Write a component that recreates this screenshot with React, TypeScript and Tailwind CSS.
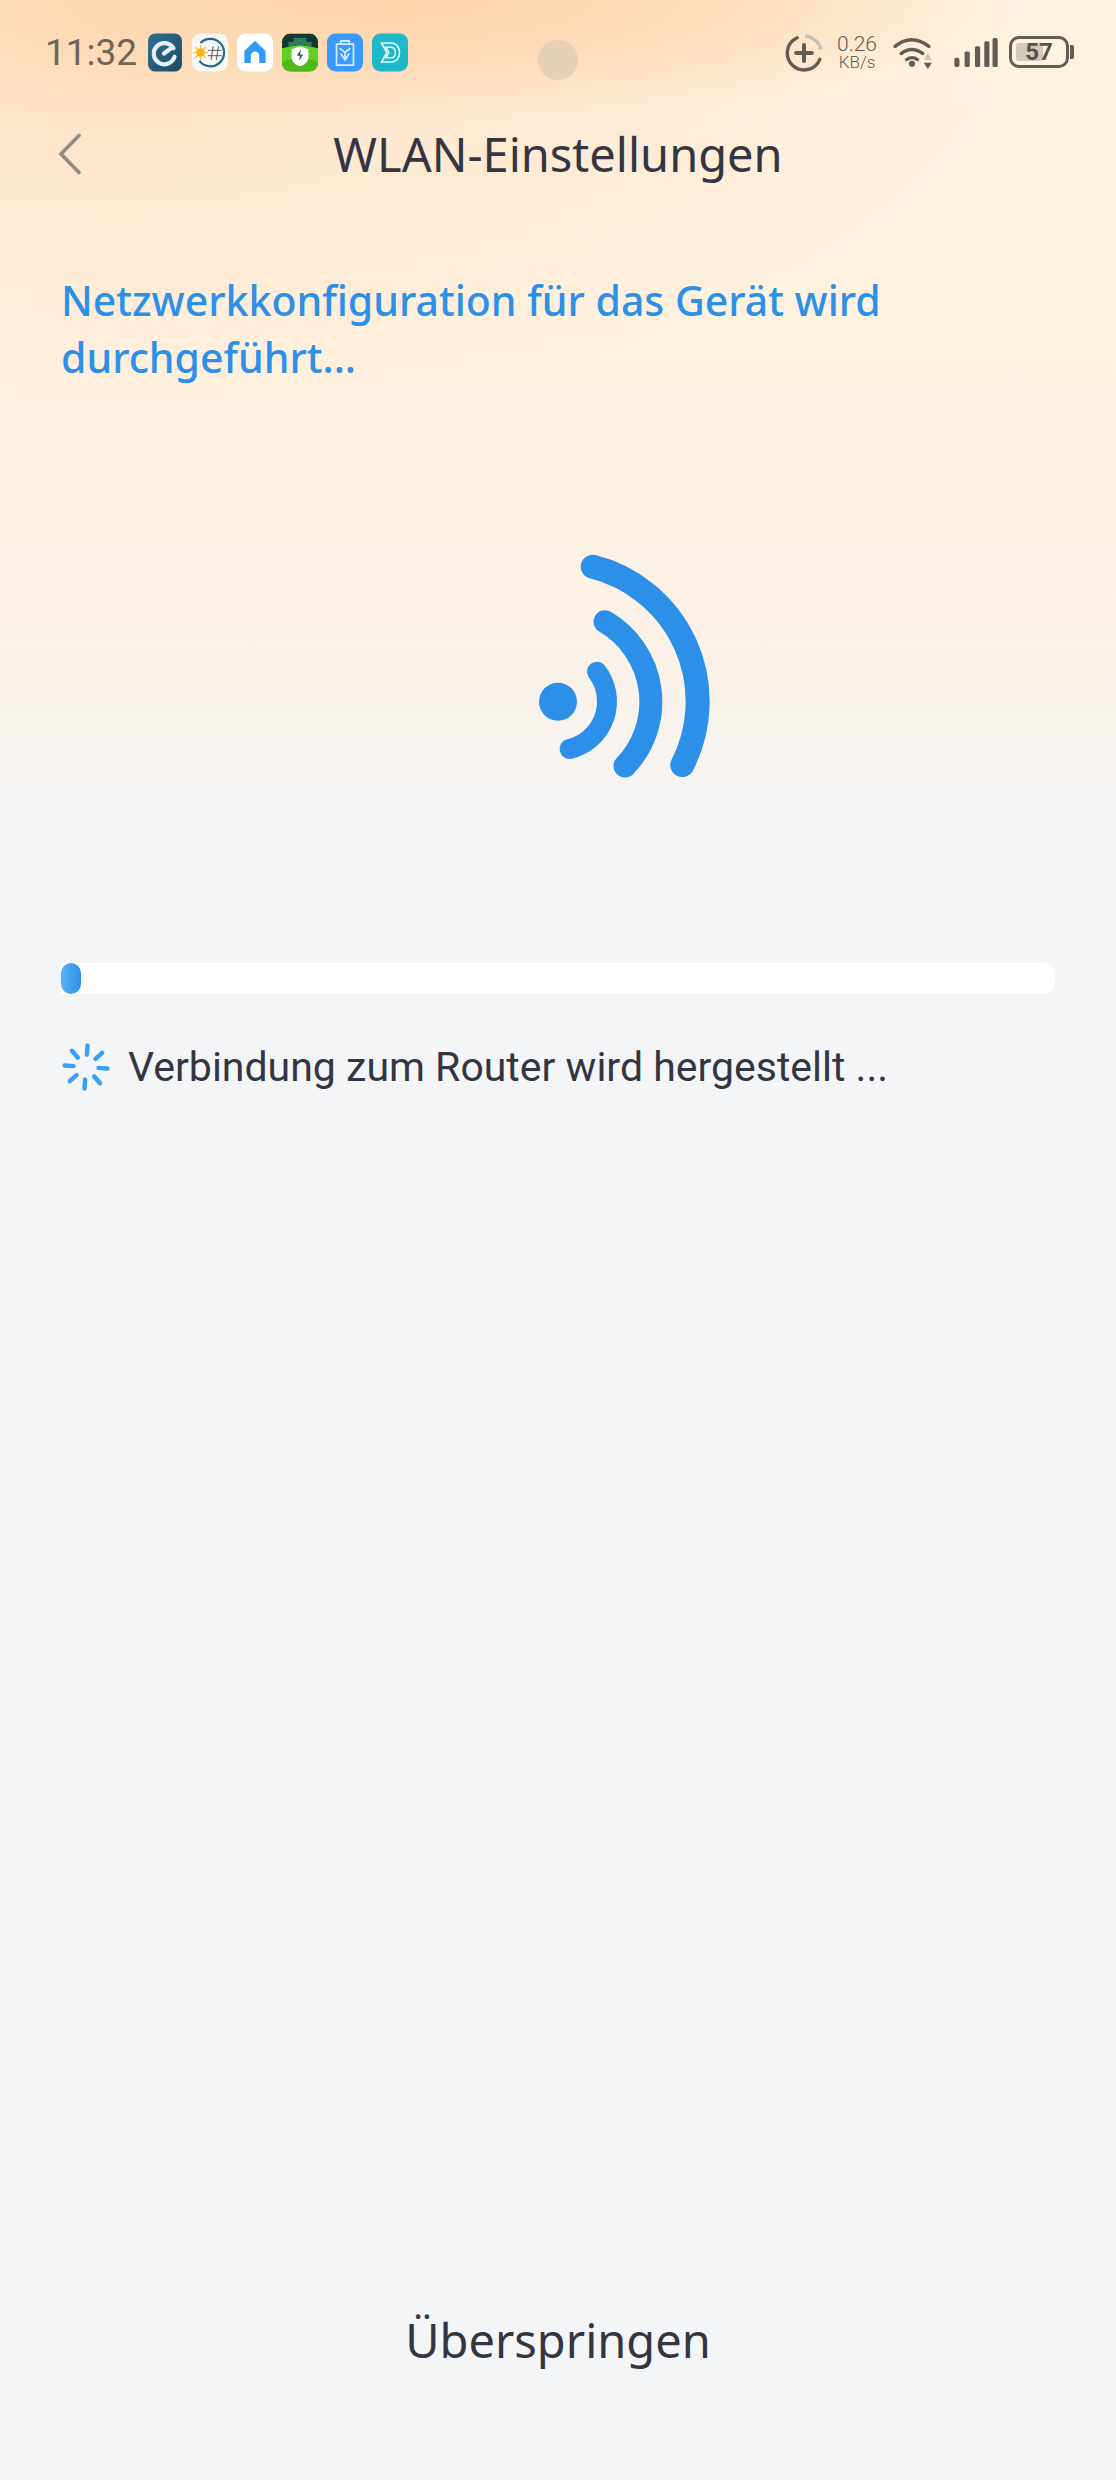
const STATUS_FONT = "font-['Roboto',sans-serif]";

const AppIcons = () => (
  <div className="ml-[10px] flex items-center gap-[9px]">
    <svg width="36" height="39" viewBox="0 0 34 36">
      <defs>
        <linearGradient id="eco" x1="0" y1="0" x2="1" y2="1">
          <stop offset="0" stopColor="#2f6f93" />
          <stop offset="1" stopColor="#1b4a66" />
        </linearGradient>
      </defs>
      <rect width="32" height="36" x="1" rx="7" fill="url(#eco)" />
      <path d="M25 14a10 10 0 1 0 1 8" fill="none" stroke="#e4f1f8" strokeWidth="4" strokeLinecap="round" />
      <path d="M16 19l8-6" fill="none" stroke="#e4f1f8" strokeWidth="4" strokeLinecap="round" />
    </svg>
    <svg width="36" height="39" viewBox="0 0 34 36">
      <rect width="34" height="36" rx="8" fill="#f7f7f4" />
      <path d="M8 9a13 13 0 1 1-1 17" fill="none" stroke="#1f6a8c" strokeWidth="2" />
      <circle cx="8" cy="18" r="4" fill="#f9b21d" />
      <path d="M8 11v14M1 18h14M3 13l10 10M13 13L3 23" stroke="#f9b21d" strokeWidth="1" />
      <path d="M20 12l-2 13M25 12l-2 13M15 16h13M15 21h13" stroke="#3d4a52" strokeWidth="0.8" />
    </svg>
    <svg width="36" height="39" viewBox="0 0 34 36">
      <rect width="34" height="36" rx="8" fill="#ffffff" />
      <path d="M7 28V16.500L17 7l10 9.500V28h-6v-7a4 4 0 0 0-8 0v7z" fill="#2f9bf5" />
    </svg>
    <svg width="36" height="39" viewBox="0 0 34 36">
      <clipPath id="shieldBox">
        <rect width="34" height="36" rx="8" />
      </clipPath>
      <g clipPath="url(#shieldBox)">
        <rect width="34" height="36" fill="#12382f" />
        <path d="M6 12V8h5V4h12v4h5v4z" fill="#2f7a63" />
        <path d="M0 14q17-5 34 0v22H0z" fill="#62cf23" />
        <path d="M0 27q17-6 34 0v9H0z" fill="#4fb81c" />
      </g>
      <path d="M17 12l8 3v7c0 5-4 8-8 9-4-1-8-4-8-9v-7z" fill="#ffffff" />
      <path d="M18 15l-4 6h3l-1 5 4-6h-3z" fill="#1e5a48" />
    </svg>
    <svg width="36" height="39" viewBox="0 0 34 36">
      <rect width="34" height="36" rx="8" fill="#3b99fb" />
      <path d="M9 10h16v20H9zM13 10V7h8v3" fill="none" stroke="#d8ecff" strokeWidth="1.600" />
      <path d="M12 14l5 4 5-4M13 19l4 6 4-6M17 18v7" fill="none" stroke="#d8ecff" strokeWidth="1.600" />
    </svg>
    <svg width="36" height="39" viewBox="0 0 34 36">
      <rect width="34" height="36" rx="8" fill="#1fb8c9" />
      <path d="M9 9h9c5 0 8 4 8 9s-3 9-8 9H9l5-9z" fill="none" stroke="#e4fafc" strokeWidth="1.500" />
      <path d="M13 13h5c3 0 4 2 4 5s-1 5-4 5h-5l3-5z" fill="none" stroke="#e4fafc" strokeWidth="1.500" />
    </svg>
  </div>
);

const StatusRight = () => (
  <div className="flex items-center text-[#625d54]">
    <svg width="40" height="40" viewBox="0 0 38 38" className="mt-[2px]">
      <path d="M35 15.500A16 16 0 0 0 20 3" fill="none" stroke="#c4c0b4" strokeWidth="3" />
      <path d="M12.500 4.500A16 16 0 1 0 34 25" fill="none" stroke="#625d54" strokeWidth="3.200" strokeLinecap="round" />
      <path d="M19 11.500v15M11.500 19h15" stroke="#625d54" strokeWidth="3.800" strokeLinecap="round" />
    </svg>
    <div className={`ml-[12px] flex w-[42px] flex-col items-center ${STATUS_FONT} leading-none`}>
      <span className="text-[21px] leading-[21px] font-light">0.26</span>
      <span className="text-[17px] leading-[15px] font-light">KB/s</span>
    </div>
    <svg width="41" height="35" viewBox="0 0 40 34" className="ml-[15px]">
      <path d="M2 11q16-13 33 0" fill="none" stroke="#625d54" strokeWidth="3.400" strokeLinecap="round" />
      <path d="M8 18q10-8 21 0" fill="none" stroke="#625d54" strokeWidth="3.400" strokeLinecap="round" />
      <path d="M13 24q6-4 11 0" fill="none" stroke="#625d54" strokeWidth="3" strokeLinecap="round" />
      <circle cx="18.500" cy="28" r="3" fill="#625d54" />
      <path d="M30 24l4-6 4 6z" fill="#c4c0b4" />
      <path d="M30 27h8l-4 6z" fill="#625d54" />
    </svg>
    <svg width="44" height="31" viewBox="0 0 42 30" className="ml-[20px]">
      <rect x="0" y="20" width="5" height="9" rx="2" fill="#625d54" />
      <rect x="10" y="14" width="5" height="15" rx="1.500" fill="#625d54" />
      <rect x="20" y="9" width="5" height="20" rx="1.500" fill="#625d54" />
      <rect x="29" y="4" width="5" height="25" rx="1.500" fill="#625d54" />
      <rect x="37" y="1" width="5" height="28" rx="1.500" fill="#625d54" />
    </svg>
    <div className="relative ml-[11px] flex h-[32px] w-[60px] items-center justify-center rounded-[10px] border-[3px] border-[#625d54]">
      <div className="absolute top-[4px] bottom-[4px] left-[4px] w-[27px] rounded-[3px] bg-[#cfcabc]" />
      <span className={`relative ${STATUS_FONT} text-[24px] leading-none font-bold text-[#56524a]`}>57</span>
    </div>
    <div className="ml-[1px] h-[14px] w-[4px] rounded-r-[2px] bg-[#625d54]" />
  </div>
);

export default function App() {
  return (
    <div className="relative flex min-h-[2480px] w-full flex-col bg-[#f4f5f7] bg-[radial-gradient(ellipse_620px_120px_at_400px_0px,#fdd4aa_0%,rgba(253,214,174,0.7)_50%,rgba(255,230,200,0)_100%),radial-gradient(ellipse_900px_420px_at_120px_0px,#fedcb9_0%,rgba(254,228,202,0.7)_45%,rgba(255,240,222,0)_100%),linear-gradient(180deg,#fff3df_0px,#fff2e0_300px,#fef1e2_480px,#faf2e9_680px,#f4f5f7_830px,#f4f5f7_100%)] font-['Noto_Sans',sans-serif]">
      <div className="absolute top-[40px] left-[538px] h-[40px] w-[40px] rounded-full bg-[#e7d0b8]" />

      <div className="flex h-[104px] items-center justify-between pr-[42px] pl-[45px]">
        <div className="flex items-center">
          <span className={`${STATUS_FONT} text-[37px] leading-none font-normal text-[#6b655b]`}>11:32</span>
          <AppIcons />
        </div>
        <StatusRight />
      </div>

      <div className="relative flex h-[100px] items-center justify-center">
        <svg width="24" height="42" viewBox="0 0 24 42" className="absolute left-[58px]">
          <path d="M21 2.500L3 21l18 18.500" fill="none" stroke="#8f8c87" strokeWidth="3.600" strokeLinecap="round" />
        </svg>
        <h1 className="text-[47px] leading-none font-normal text-[#333542]">WLAN-Einstellungen</h1>
      </div>

      <p className="mt-[68px] px-[61px] text-[41px] leading-[57px] font-medium text-[#2d90e8]">
        Netzwerkkonfiguration für das Gerät wird durchgeführt...
      </p>

      <div className="mt-[134px]">
        <svg width="1116" height="240" viewBox="0 520 1116 240" className="block overflow-visible">
          <circle cx="558" cy="701.700" r="19" fill="#2d90e8" />
          <g fill="none" stroke="#2d90e8" strokeLinecap="round">
            <path d="M597 671.700A49 49 0 0 1 569.500 749" strokeWidth="20" />
            <path d="M605 621.700A92.800 92.800 0 0 1 625 766" strokeWidth="23" />
            <path d="M592.700 566.700A139 139 0 0 1 682.300 765" strokeWidth="24" />
          </g>
        </svg>
      </div>

      <div className="mx-[61px] mt-[203px] h-[31px] rounded-r-[12px] bg-white">
        <div className="h-full w-[20px] rounded-[10px] bg-gradient-to-r from-[#5ab2f8] to-[#2d90e8]" />
      </div>

      <div className="mt-[49px] ml-[62px] flex items-center">
        <svg width="48" height="48" viewBox="-24 -24 48 48">
          <g stroke="#3b9ef5" strokeWidth="4.400" strokeLinecap="round">
            {[0, 1, 2, 3, 4, 5, 6, 7].map((i) => (
              <line key={i} x1="0" y1="-12.500" x2="0" y2="-21.500" transform={`rotate(${i * 45 + 4})`} />
            ))}
          </g>
        </svg>
        <span className={`ml-[18px] ${STATUS_FONT} text-[41px] leading-none text-[#333542]`}>
          Verbindung zum Router wird hergestellt ...
        </span>
      </div>

      <div className="mt-auto flex h-[180px] justify-center">
        <button className="h-[80px] text-[47px] leading-none text-[#333542]">Überspringen</button>
      </div>
    </div>
  );
}
